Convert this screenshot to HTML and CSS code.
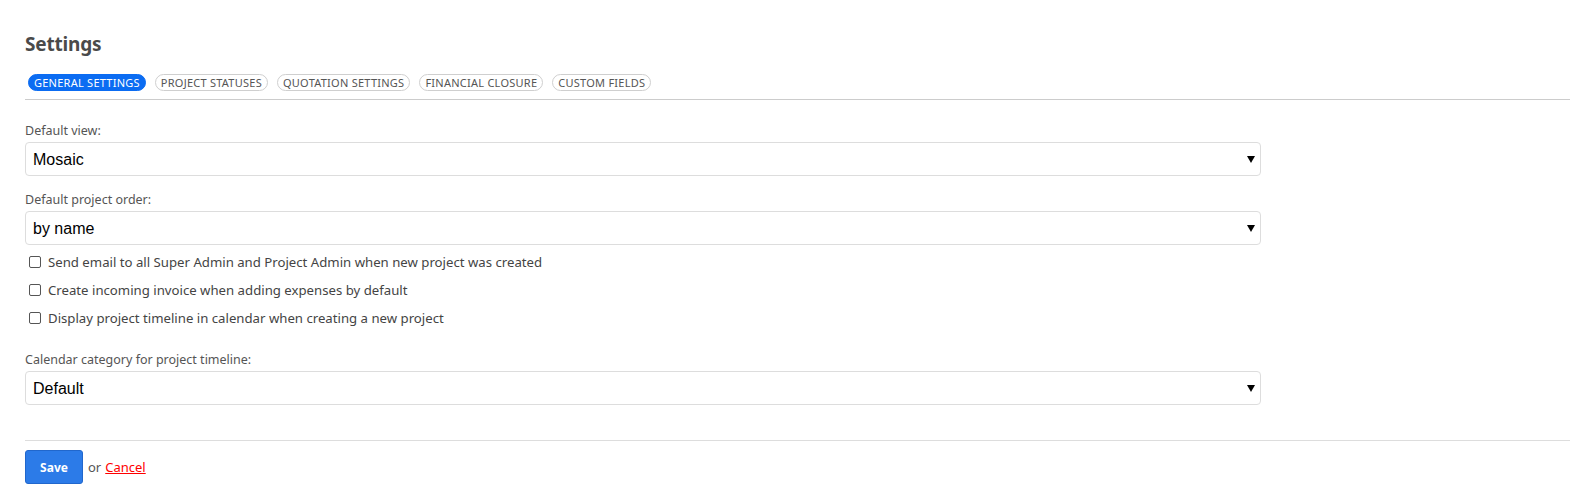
FILE: index.html
```html
<!DOCTYPE html>
<html>
<head>
<meta charset="utf-8">
<link rel="stylesheet" href="styles.css">
</head>
<body>
<div class="page">
  <h1 class="title">Settings</h1>
  <nav class="tabs">
    <span class="tab active">GENERAL SETTINGS</span>
    <span class="tab">PROJECT STATUSES</span>
    <span class="tab">QUOTATION SETTINGS</span>
    <span class="tab">FINANCIAL CLOSURE</span>
    <span class="tab">CUSTOM FIELDS</span>
  </nav>
  <form class="form">
    <div class="field">
      <label class="label">Default view:</label>
      <div class="select-wrap">
        <select class="select"><option>Mosaic</option></select>
        <svg class="arrow" width="8" height="8" viewBox="0 0 8 8"><path d="M0 1h8L4 8z" fill="#000"/></svg>
      </div>
    </div>
    <div class="field">
      <label class="label">Default project order:</label>
      <div class="select-wrap">
        <select class="select"><option>by name</option></select>
        <svg class="arrow" width="8" height="8" viewBox="0 0 8 8"><path d="M0 1h8L4 8z" fill="#000"/></svg>
      </div>
    </div>
    <div class="checks">
      <label class="check"><span class="box"></span>Send email to all Super Admin and Project Admin when new project was created</label>
      <label class="check"><span class="box"></span>Create incoming invoice when adding expenses by default</label>
      <label class="check"><span class="box"></span>Display project timeline in calendar when creating a new project</label>
    </div>
    <div class="field field-cal">
      <label class="label">Calendar category for project timeline:</label>
      <div class="select-wrap">
        <select class="select"><option>Default</option></select>
        <svg class="arrow" width="8" height="8" viewBox="0 0 8 8"><path d="M0 1h8L4 8z" fill="#000"/></svg>
      </div>
    </div>
    <div class="actions">
      <button type="button" class="btn-save">Save</button>
      <span class="or">or</span>
      <a class="cancel" href="#">Cancel</a>
    </div>
  </form>
</div>
</body>
</html>
```

FILE: styles.css
```css
* { box-sizing: border-box; }
html, body { margin: 0; padding: 0; background: #fff; }
body { font-family: "Noto Sans", "Open Sans", sans-serif; color: #555; }
.page { padding: 30px 12px 0 25px; }
.title {
  margin: 0;
  font-size: 19px;
  font-weight: 700;
  color: #4a4a4a;
  line-height: 28px;
  letter-spacing: -0.2px;
}
.tabs {
  display: flex;
  gap: 9px;
  margin-top: 16px;
  padding: 0 0 8px 3px;
  border-bottom: 1px solid #ccc;
}
.tab {
  display: inline-flex;
  align-items: center;
  height: 17px;
  padding: 0 5px;
  border: 1px solid #cfcfcf;
  border-radius: 9px;
  font-size: 11px;
  color: #555;
  letter-spacing: 0.25px;
  white-space: nowrap;
}
.tab.active { background: #0b6cf2; border-color: #0b6cf2; color: #fff; }
.form { display: block; }
.field { margin-top: 22px; width: 1236px; }
.field + .field { margin-top: 15px; }
.label { display: block; font-size: 12.5px; color: #555; line-height: 18px; margin-bottom: 2px; }
.select-wrap { position: relative; }
.select {
  appearance: none;
  -webkit-appearance: none;
  width: 100%;
  height: 34px;
  border: 1px solid #ddd;
  border-radius: 4px;
  background: #fff;
  padding: 0 7px;
  font-family: "Liberation Sans", Arial, sans-serif;
  font-size: 16px;
  color: #000;
  outline: none;
}
.arrow { position: absolute; right: 6px; top: 13px; pointer-events: none; }
.checks { display: flex; flex-direction: column; margin-top: 3px; }
.check {
  display: flex;
  align-items: center;
  height: 28px;
  font-size: 13.2px;
  color: #444;
  padding-left: 4px;
}
.box {
  width: 12px; height: 12px;
  border: 1px solid #555;
  border-radius: 2px;
  margin-right: 7px;
  background: #fff;
}
.field.field-cal { margin-top: 19px; }
.actions {
  display: flex;
  align-items: center;
  margin-top: 35px;
  padding-top: 9px;
  border-top: 1px solid #ddd;
  font-size: 13px;
}
.btn-save {
  width: 58px;
  height: 34px;
  background: #2c7be8;
  border: 1px solid #2167cc;
  border-radius: 3px;
  color: #fff;
  font-family: "Noto Sans", sans-serif;
  font-weight: 700;
  font-size: 12px;
  padding: 0;
}
.or { margin-left: 5px; color: #555; }
.cancel { margin-left: 4px; color: #f00; text-decoration: underline; }
```
